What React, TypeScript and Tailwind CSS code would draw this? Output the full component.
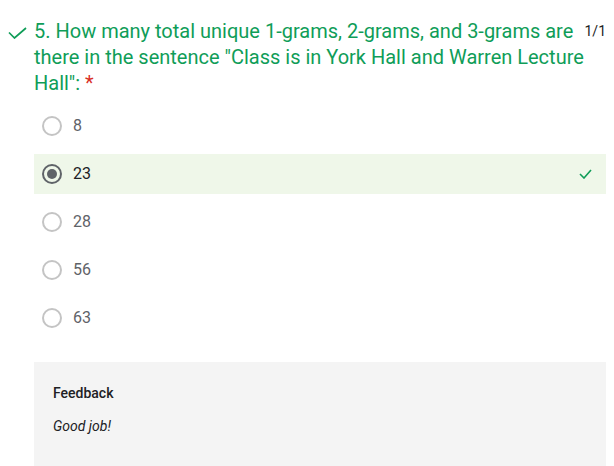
import React from "react";

const options = ["8", "23", "28", "56", "63"];
const selected = "23";

function Radio({ checked }: { checked: boolean }) {
  return (
    <span
      className={`flex h-5 w-5 shrink-0 items-center justify-center rounded-full border-2 ${
        checked ? "border-[#5f6368]" : "border-[#c4c4c4]"
      }`}
    >
      {checked && <span className="h-2.5 w-2.5 rounded-full bg-[#5f6368]" />}
    </span>
  );
}

export default function App() {
  return (
    <div className="h-[466px] w-[614px] overflow-hidden bg-white font-['Roboto',sans-serif]">
      <div className="flex pr-2 pt-[18px]">
        <div className="w-[34px] shrink-0 pl-[8px] pt-[9px]">
          <svg width="19" height="12" viewBox="0 0 19 12" fill="none">
            <path d="M1 5.5l5.5 5.5L18 1" stroke="#0f9d58" strokeWidth="1.7" />
          </svg>
        </div>
        <div className="text-[20px] leading-[26px] text-[#0f9d58]">
          <span className="float-right ml-1 text-[14px] leading-[26px] text-[#202124]">1/1</span>
          5. How many total unique 1-grams, 2-grams, and 3-grams are there in the sentence "Class is in York
          Hall and Warren Lecture Hall": <span className="text-[#d93025]">*</span>
        </div>
      </div>

      <div className="mt-[10px] flex flex-col gap-2 pl-[34px] pr-2">
        {options.map((o) => {
          const checked = o === selected;
          return (
            <div
              key={o}
              className={`flex h-10 items-center pl-2 pr-[14px] ${checked ? "bg-[#eff7e9]" : ""}`}
            >
              <Radio checked={checked} />
              <span
                className={`ml-[11px] text-[16px] ${checked ? "text-[#202124]" : "text-[#5f6368]"}`}
              >
                {o}
              </span>
              {checked && (
                <svg className="ml-auto" width="13" height="10" viewBox="0 0 13 10" fill="none">
                  <path d="M1 5l4 4L12 1" stroke="#0f9d58" strokeWidth="1.6" />
                </svg>
              )}
            </div>
          );
        })}
      </div>

      <div className="ml-[34px] mr-2 mt-[24px] h-[120px] bg-[#f4f4f4] px-[19px] pt-[21px]">
        <div className="text-[14px] font-medium leading-5 text-[#202124]">Feedback</div>
        <div className="mt-[13px] text-[14px] italic leading-5 text-[#202124]">Good job!</div>
      </div>
    </div>
  );
}
